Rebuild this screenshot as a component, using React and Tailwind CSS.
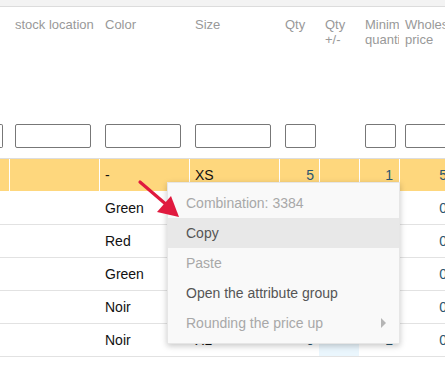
import React from "react";

const cols = [
  { key: "c0", w: "w-[9px]", label: [] },
  { key: "loc", w: "w-[90px]", label: ["stock location"], input: "w-[76px]" },
  { key: "color", w: "w-[90px]", label: ["Color"], input: "w-[76px]" },
  { key: "size", w: "w-[90px]", label: ["Size"], input: "w-[76px]" },
  { key: "qty", w: "w-[40px]", label: ["Qty"], input: "w-[31px]" },
  { key: "qtyd", w: "w-[40px]", label: ["Qty", "+/-"] },
  { key: "min", w: "w-[40px]", label: ["Minim", "quanti"], input: "w-[31px]" },
  { key: "whole", w: "w-[52px]", label: ["Wholes", "price"], input: "w-[60px]" },
];

const rows = [
  { color: "-", size: "XS", qty: "5", min: "1", whole: "5", active: true },
  { color: "Green", size: "XS", qty: "0", min: "1", whole: "0" },
  { color: "Red", size: "S", qty: "0", min: "1", whole: "0" },
  { color: "Green", size: "M", qty: "0", min: "1", whole: "0" },
  { color: "Noir", size: "L", qty: "0", min: "1", whole: "0" },
  { color: "Noir", size: "XL", qty: "0", min: "1", whole: "0", last: true },
];

const menu = [
  { label: "Combination: 3384", muted: true },
  { label: "Copy", hover: true },
  { label: "Paste", muted: true },
  { label: "Open the attribute group" },
  { label: "Rounding the price up", muted: true, sub: true },
];

const Header = () => (
  <div className="flex h-[152px] border-b border-[#dddddd]">
    {cols.map((c, i) => (
      <div
        key={c.key}
        className={`${c.w} shrink-0 flex flex-col justify-between pb-[10px] overflow-hidden ${i > 0 ? "pl-[6px]" : ""}`}
      >
        <div className="pt-[10px] text-[13px] leading-[15px] text-[#999999] whitespace-nowrap">
          {c.label.map((l) => (
            <div key={l}>{l}</div>
          ))}
        </div>
        {i === 0 ? (
          <div className="h-[24px] w-[3px] border border-[#777] border-l-0 rounded-r-[2px]" />
        ) : c.input ? (
          <div className={`h-[24px] ${c.input} shrink-0 border border-[#777] rounded-[2px] bg-white`} />
        ) : (
          <div className="h-[24px]" />
        )}
      </div>
    ))}
  </div>
);

const Row = ({ r }) => {
  const cell = "shrink-0 flex items-center h-full overflow-hidden";
  const sep = r.active ? "border-l border-white" : "border-l border-transparent";
  return (
    <div
      className={`flex h-[33px] border-b ${r.active ? "bg-[#fed77d] border-white" : "bg-white border-[#e2e2e2]"} text-[14px]`}
    >
      <div className={`w-[9px] ${cell}`} />
      <div className={`w-[90px] ${cell} ${sep}`} />
      <div className={`w-[90px] ${cell} ${sep} pl-[5px] text-[#111]`}>{r.color}</div>
      <div className={`w-[90px] ${cell} ${sep} pl-[5px] text-[#111]`}>{r.size}</div>
      <div className={`w-[40px] ${cell} ${sep} justify-end pr-[5px] text-[#2a5670]`}>{r.qty}</div>
      <div className={`w-[40px] ${cell} ${sep} ${r.last ? "bg-[#eaf6fd]" : ""}`} />
      <div className={`w-[40px] ${cell} ${sep} justify-end pr-[6px] text-[#2a5670]`}>{r.min}</div>
      <div className={`w-[52px] ${cell} ${sep} justify-end pr-[4px] text-[#2a5670]`}>{r.whole}</div>
    </div>
  );
};

const ContextMenu = () => (
  <div className="absolute left-[167px] top-[182px] w-[233px] py-[5px] bg-[#f9f9f9] border border-[#e6e6e6] shadow-[0_2px_6px_rgba(0,0,0,0.22)]">
    {menu.map((m) => (
      <div
        key={m.label}
        className={`relative h-[30px] flex items-center pl-[18px] text-[14px] ${m.hover ? "bg-[#e8e8e8]" : ""} ${m.muted ? "text-[#a8a8a8]" : "text-[#555555]"}`}
      >
        {m.label}
        {m.sub && (
          <svg className="absolute right-[13px] top-[10px]" width="5" height="10" viewBox="0 0 5 10">
            <path d="M0 0 L5 5 L0 10 Z" fill="#b5b5b5" />
          </svg>
        )}
      </div>
    ))}
  </div>
);

const Arrow = () => (
  <svg className="absolute left-0 top-0 pointer-events-none" width="445" height="386">
    <line x1="140" y1="182" x2="168" y2="206" stroke="#e0193e" strokeWidth="3.2" strokeLinecap="round" />
    <path d="M179 217 L157 212 L171 196 Z" fill="#e0193e" />
  </svg>
);

export default function App() {
  return (
    <div
      className="relative w-[445px] h-[386px] overflow-hidden bg-white"
      style={{ fontFamily: '"Liberation Sans", Arial, sans-serif' }}
    >
      <div className="h-[7px] bg-[#f3f3f3] border-b border-[#dcdcdc]" />
      <div className="w-[480px]">
        <Header />
        {rows.map((r, i) => (
          <Row key={i} r={r} />
        ))}
      </div>
      <ContextMenu />
      <Arrow />
    </div>
  );
}
